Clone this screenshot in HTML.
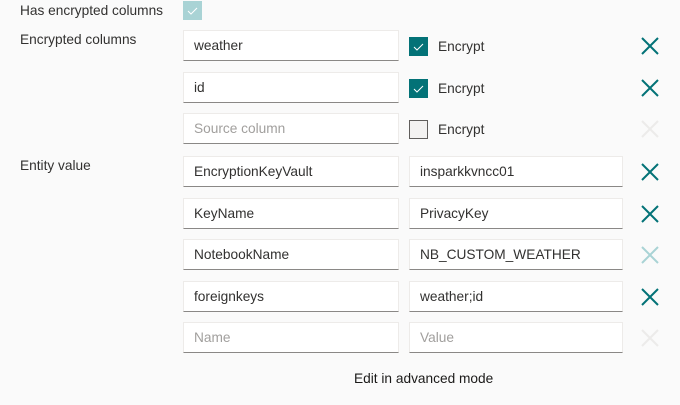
<!DOCTYPE html>
<html><head><style>
body{margin:0;background:#fafafa;width:680px;height:405px;position:relative;font-family:"Liberation Sans",sans-serif;font-size:13.7px;color:#323130;overflow:hidden}
.a{position:absolute}
.in{position:absolute;height:31px;background:#fff;border:1px solid #edebe9;border-bottom:1px solid #8a8886;box-sizing:border-box;padding-left:10px;line-height:30px;font-size:13.7px}
.ph{color:#a19f9d}
.cb{position:absolute;width:19px;height:19px;box-sizing:border-box}
.x{position:absolute;width:18px;height:18px}
</style></head><body>
<div class="a" style="left:20px;top:3px">Has encrypted columns</div>
<div class="cb" style="left:183px;top:1px;background:#a9d3d5"><svg width="19" height="19"><path d="M5 10l3 3 6-6" stroke="#fff" stroke-width="1" fill="none"/></svg></div>
<div class="a" style="left:20px;top:32px">Encrypted columns</div>
<div class="a" style="left:20px;top:158px">Entity value</div>

<div class="in" style="left:183px;top:30px;width:216px">weather</div>
<div class="in" style="left:183px;top:72px;width:216px">id</div>
<div class="in ph" style="left:183px;top:113px;width:216px">Source column</div>

<div class="cb" style="left:409px;top:37px;background:#037277"><svg width="19" height="19"><path d="M5 10l3 3 6-6" stroke="#fff" stroke-width="1" fill="none"/></svg></div>
<div class="a" style="left:438px;top:39px">Encrypt</div>
<div class="cb" style="left:409px;top:79px;background:#037277"><svg width="19" height="19"><path d="M5 10l3 3 6-6" stroke="#fff" stroke-width="1" fill="none"/></svg></div>
<div class="a" style="left:438px;top:81px">Encrypt</div>
<div class="cb" style="left:409px;top:120px;background:#f3f2f1;border:1px solid #605e5c"></div>
<div class="a" style="left:438px;top:122px">Encrypt</div>

<div class="in" style="left:183px;top:156px;width:216px">EncryptionKeyVault</div>
<div class="in" style="left:409px;top:156px;width:214px">insparkkvncc01</div>
<div class="in" style="left:183px;top:198px;width:216px">KeyName</div>
<div class="in" style="left:409px;top:198px;width:214px">PrivacyKey</div>
<div class="in" style="left:183px;top:239px;width:216px">NotebookName</div>
<div class="in" style="left:409px;top:239px;width:214px">NB_CUSTOM_WEATHER</div>
<div class="in" style="left:183px;top:281px;width:216px">foreignkeys</div>
<div class="in" style="left:409px;top:281px;width:214px">weather;id</div>
<div class="in ph" style="left:183px;top:322px;width:216px">Name</div>
<div class="in ph" style="left:409px;top:322px;width:214px">Value</div>

<svg class="x" style="left:641px;top:37px"><path d="M1 1L17 17M17 1L1 17" stroke="#037277" stroke-width="2"/></svg>
<svg class="x" style="left:641px;top:79px"><path d="M1 1L17 17M17 1L1 17" stroke="#037277" stroke-width="2"/></svg>
<svg class="x" style="left:641px;top:120px"><path d="M1 1L17 17M17 1L1 17" stroke="#ecebea" stroke-width="2"/></svg>
<svg class="x" style="left:641px;top:163px"><path d="M1 1L17 17M17 1L1 17" stroke="#037277" stroke-width="2"/></svg>
<svg class="x" style="left:641px;top:205px"><path d="M1 1L17 17M17 1L1 17" stroke="#037277" stroke-width="2"/></svg>
<svg class="x" style="left:641px;top:246px"><path d="M1 1L17 17M17 1L1 17" stroke="#a9d3d5" stroke-width="2"/></svg>
<svg class="x" style="left:641px;top:288px"><path d="M1 1L17 17M17 1L1 17" stroke="#037277" stroke-width="2"/></svg>
<svg class="x" style="left:641px;top:329px"><path d="M1 1L17 17M17 1L1 17" stroke="#ecebea" stroke-width="2"/></svg>

<div class="a" style="left:354px;top:371px;color:#1b1a19">Edit in advanced mode</div>
</body></html>
